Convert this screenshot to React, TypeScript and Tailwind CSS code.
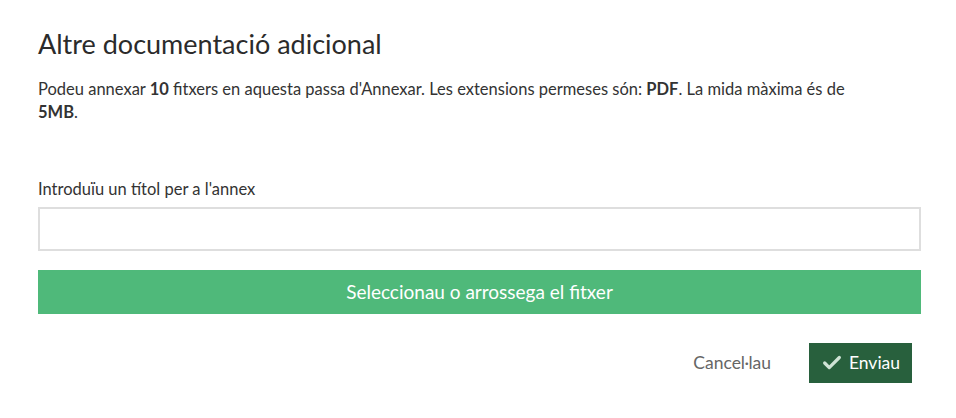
import { Check } from 'lucide-react';

export default function App() {
  return (
    <div className="w-[956px] h-[418px] bg-white text-[#333] font-['Lato',sans-serif]">
      <div className="pl-[38px] pr-[35px] pt-[26px]">
        <h1 className="text-[27px] leading-[36px] font-normal text-[#2b2b2b]">Altre documentació adicional</h1>
        <p className="mt-[16px] max-w-[825px] text-[16.5px] leading-[23px]">
          Podeu annexar <b>10</b> fitxers en aquesta passa d'Annexar. Les extensions permeses són: <b>PDF</b>. La mida màxima és de <b>5MB</b>.
        </p>

        <label className="block mt-[54px] text-[16.5px] leading-[23px]">Introduïu un títol per a l'annex</label>
        <input type="text" className="block mt-[6px] w-full h-[44px] border-2 border-[#dedede] outline-none px-3" />

        <button type="button" className="mt-[19px] w-full h-[44px] bg-[#4fb97a] text-white text-[19px]">
          Seleccionau o arrossega el fitxer
        </button>

        <div className="flex justify-end items-center gap-[38px] mt-[29px] pr-[9px]">
          <button type="button" className="text-[17.5px] text-[#666]">Cancel·lau</button>
          <button type="button" className="h-[40px] w-[103px] bg-[#28603d] text-white text-[17.5px] flex items-center justify-center gap-[6px]">
            <Check size={22} strokeWidth={3.5} className="text-[#cfe3d5]" />
            Enviau
          </button>
        </div>
      </div>
    </div>
  );
}
